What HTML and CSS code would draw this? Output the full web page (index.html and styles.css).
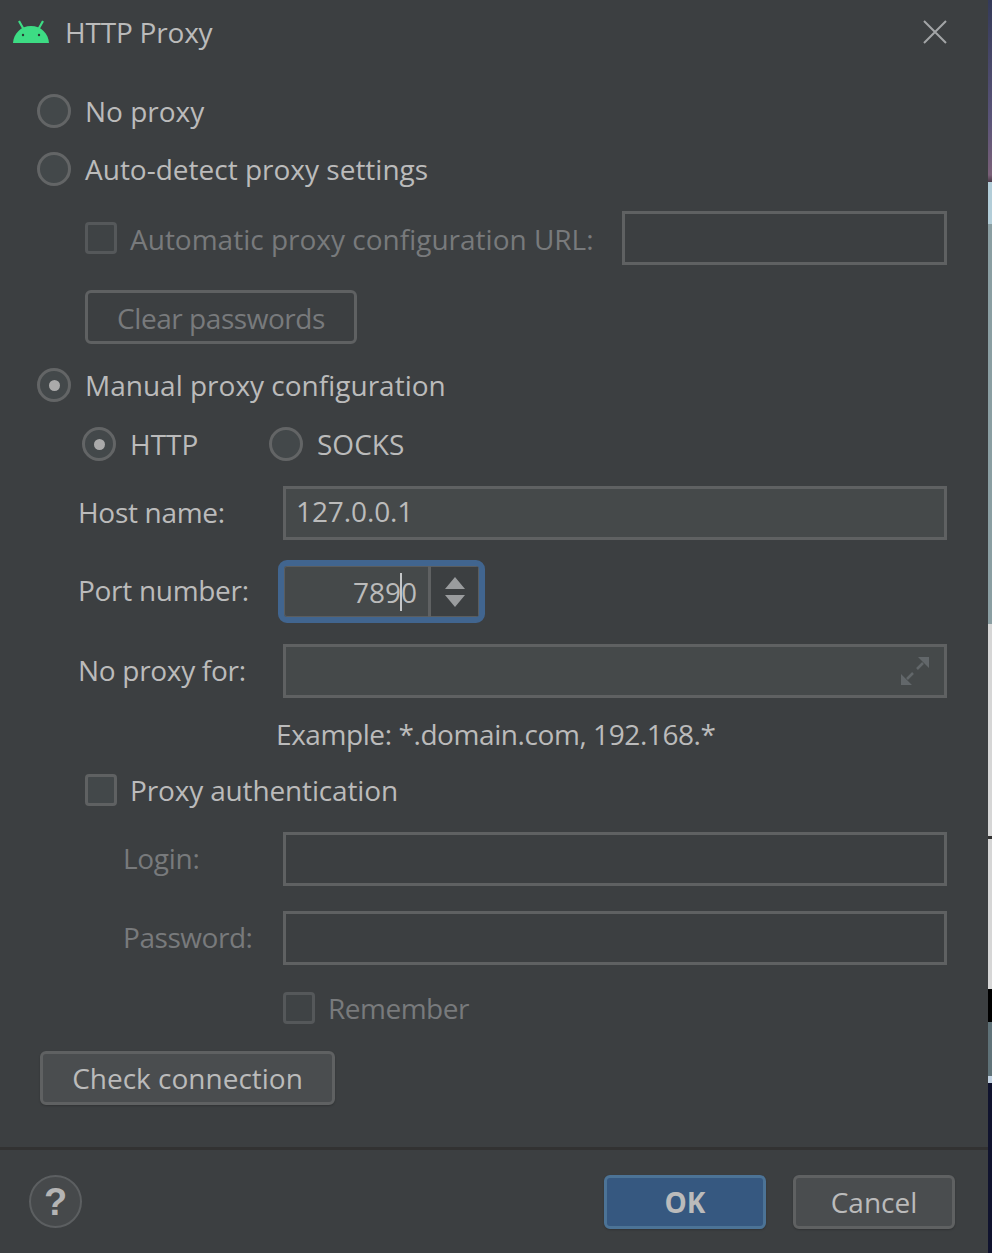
FILE: index.html
```html
<!DOCTYPE html>
<html lang="en">
<head>
<meta charset="utf-8">
<title>HTTP Proxy</title>
<link rel="stylesheet" href="styles.css">
</head>
<body>
<div class="screen">
  <main class="dialog">
    <header class="titlebar">
      <svg class="android" viewBox="0 0 36 24" width="36" height="24" aria-hidden="true">
        <path d="M0 23C0.600 13.500 8 6 18 6s17.400 7.500 18 17Z" fill="#3ddc84"/>
        <path d="M6 1 10.500 9M30 1 25.500 9" stroke="#3ddc84" stroke-width="2.200" fill="none"/>
        <circle cx="10" cy="15" r="1.200" fill="#2b3a33"/>
        <circle cx="26" cy="15" r="1.200" fill="#2b3a33"/>
      </svg>
      <span class="title">HTTP Proxy</span>
      <svg class="close" viewBox="0 0 24 24" width="24" height="24" aria-hidden="true">
        <path d="M1 1 23 23M23 1 1 23" stroke="#a3a5a7" stroke-width="2" fill="none"/>
      </svg>
    </header>

    <section class="content">
      <label class="row r-noproxy"><span class="radio"></span><span>No proxy</span></label>
      <label class="row r-auto"><span class="radio"></span><span>Auto-detect proxy settings</span></label>

      <div class="row r-url dim">
        <span class="check"></span>
        <span class="url-label">Automatic proxy configuration URL:</span>
        <span class="field field-url"></span>
      </div>

      <div class="r-clear"><span class="btn btn-clear">Clear passwords</span></div>

      <label class="row r-manual"><span class="radio on"></span><span>Manual proxy configuration</span></label>

      <div class="row r-type">
        <span class="radio on"></span><span class="type-http">HTTP</span>
        <span class="radio"></span><span>SOCKS</span>
      </div>

      <div class="form r-host">
        <span class="form-label">Host name:</span>
        <span class="field field-fill filled">127.0.0.1</span>
      </div>

      <div class="form r-port">
        <span class="form-label">Port number:</span>
        <span class="spinner">
          <span class="spin-value">789<span class="caret"></span>0</span>
          <span class="spin-arrows">
            <svg viewBox="0 0 20 30" width="20" height="30" aria-hidden="true">
              <path d="M10 0 20 12H0ZM0 18H20L10 30Z" fill="#9a9c9e"/>
            </svg>
          </span>
        </span>
      </div>

      <div class="form r-for">
        <span class="form-label">No proxy for:</span>
        <span class="field field-fill filled expand">
          <svg viewBox="0 0 28 28" width="28" height="28" aria-hidden="true">
            <path d="M28 0V11L17 0ZM0 28V17L11 28Z" fill="#62676a"/>
            <path d="M22 6 16 12M6 22 12 16" stroke="#62676a" stroke-width="2.500" fill="none"/>
          </svg>
        </span>
      </div>

      <div class="example">Example: *.domain.com, 192.168.*</div>

      <label class="row r-auth"><span class="check"></span><span>Proxy authentication</span></label>

      <div class="form r-login dim">
        <span class="form-label sub">Login:</span>
        <span class="field field-fill"></span>
      </div>
      <div class="form r-pass dim">
        <span class="form-label sub">Password:</span>
        <span class="field field-fill"></span>
      </div>

      <div class="row r-remember dim"><span class="check"></span><span>Remember</span></div>

      <div class="r-check"><span class="btn btn-check">Check connection</span></div>
    </section>

    <footer class="footer">
      <span class="help">?</span>
      <span class="actions">
        <span class="btn btn-ok">OK</span>
        <span class="btn btn-cancel">Cancel</span>
      </span>
    </footer>
  </main>
  <aside class="strip"></aside>
</div>
</body>
</html>
```
FILE: styles.css
```css
* { box-sizing: border-box; }
html, body { margin: 0; padding: 0; }
body {
  width: 992px;
  height: 1253px;
  overflow: hidden;
  background: #3c3f41;
  font-family: "Open Sans", "Noto Sans", sans-serif;
  font-size: 28px;
  line-height: 40px;
  color: #bbbbbb;
}
.screen { display: flex; height: 1253px; }
.dialog { width: 988px; display: flex; flex-direction: column; background: #3c3f41; }
.strip {
  width: 4px;
  background: linear-gradient(to bottom,
    #343a58 0, #5a5478 120px, #7a6078 175px, #4a3a48 182px,
    #b2cdd8 182px, #b2cdd8 224px,
    #8a9ea2 224px, #8a9ea2 624px,
    #d6d6d6 624px, #d6d6d6 836px, #333333 836px, #333333 839px, #d6d6d6 839px, #d6d6d6 989px,
    #000000 989px, #000000 1022px,
    #5f7278 1022px, #5f7278 1076px,
    #c0d0e0 1076px, #c0d0e0 1083px,
    #10132e 1083px, #10132e 1253px);
}

.titlebar { height: 64px; display: flex; align-items: center; padding: 0 41px 0 13px; }
.android { flex: none; }
.title { margin-left: 16px; flex: 1; letter-spacing: -0.2px; }
.close { flex: none; }

.content { flex: 1; display: flex; flex-direction: column; padding: 0 41px 0 37px; }
.row { display: flex; align-items: center; height: 40px; }
.dim { color: #787a7c; }

.radio {
  flex: none;
  width: 34px;
  height: 34px;
  border: 3px solid #636566;
  border-radius: 50%;
  background: #43484a;
  display: flex;
  align-items: center;
  justify-content: center;
  margin-right: 14px;
}
.radio.on::after {
  content: "";
  width: 11px;
  height: 11px;
  border-radius: 50%;
  background: #aaaaaa;
}
.check {
  flex: none;
  width: 32px;
  height: 32px;
  border: 3px solid #5f6162;
  border-radius: 4px;
  background: #43484a;
  margin-right: 13px;
}
.dim .check { border-color: #55585a; background: #3f4345; }
.field {
  display: block;
  height: 54px;
  border: 3px solid #5f6162;
  background: #3c3f41;
}
.filled { background: #45494a; }
.field-fill {
  flex: 1;
  padding: 0 10px;
  line-height: 44px;
  letter-spacing: -0.1px;
}

.r-noproxy { margin-top: 27px; }
.r-auto { margin-top: 18px; }
.r-url { margin-top: 22px; padding-left: 48px; height: 54px; }
.url-label { width: 492px; padding-top: 1px; flex: none; white-space: nowrap; }
.field-url { flex: 1; }
.r-clear { margin-top: 25px; padding-left: 48px; display: flex; }
.r-manual { margin-top: 21px; }
.r-type { margin-top: 19px; padding-left: 45px; }
.type-http { width: 139px; }
.form { display: flex; align-items: center; }
.form-label {
  width: 246px;
  padding: 0 0 3px 41px;
  flex: none;
  white-space: nowrap;
  letter-spacing: -0.3px;
}
.form-label.sub { padding-left: 86px; }
.r-pass .form-label { letter-spacing: -0.45px; }
.r-host { margin-top: 22px; height: 54px; }
.r-port { margin-top: 20px; height: 63px; }
.r-for { margin-top: 21px; height: 54px; }
.example { margin-top: 16px; padding-left: 239px; letter-spacing: -0.42px; }
.r-auth { margin-top: 16px; padding-left: 48px; letter-spacing: -0.15px; }
.r-login { margin-top: 22px; height: 54px; }
.r-login .form-label { padding-bottom: 2px; }
.r-pass { margin-top: 25px; height: 54px; }
.r-remember { margin-top: 23px; padding-left: 246px; letter-spacing: -0.5px; }
.r-check { margin-top: 23px; display: flex; padding-left: 3px; }

.spinner {
  width: 207px;
  height: 63px;
  margin-left: -5px;
  border: 6px solid #41658f;
  border-radius: 9px;
  display: flex;
  background: #45494a;
  box-shadow: inset 0 0 0 1px #5a5d5f;
}
.spin-value {
  width: 147px;
  height: 51px;
  text-align: right;
  padding-right: 11px;
  line-height: 53px;
  border-right: 3px solid #5f6162;
  white-space: nowrap;
}
.caret {
  display: inline-block;
  width: 2px;
  height: 38px;
  margin: 0 -1px;
  vertical-align: -8px;
  background: #c4c6c8;
}
.spin-arrows {
  flex: 1;
  margin: 1px 1px 1px 0;
  background: #3c3f41;
  display: flex;
  align-items: center;
  justify-content: center;
}
.expand { display: flex; align-items: center; justify-content: flex-end; padding-right: 15px; }

.btn {
  display: flex;
  align-items: center;
  justify-content: center;
  height: 54px;
  border: 3px solid #5f6162;
  border-radius: 6px;
}
.btn-clear {
  width: 272px;
  color: #787a7c;
  background: #3c3f41;
  padding-top: 1px;
  letter-spacing: -0.45px;
}
.btn-check { width: 295px; background: #4a4d4f; box-shadow: 0 1px 2px rgba(0,0,0,.2); }

.footer {
  height: 106px;
  border-top: 3px solid #323232;
  display: flex;
  align-items: center;
  justify-content: space-between;
  padding: 0 33px 0 29px;
}
.help {
  width: 53px;
  height: 53px;
  border: 2px solid #5c5f61;
  border-radius: 50%;
  background: #46494b;
  display: flex;
  align-items: center;
  justify-content: center;
  font-family: "Liberation Sans", sans-serif;
  font-weight: 700;
  font-size: 38px;
  color: #b4b4b4;
}
.actions { display: flex; gap: 27px; }
.btn-ok {
  width: 162px;
  background: #365880;
  border-color: #4c7396;
  font-weight: 700;
  box-shadow: 0 1px 2px rgba(0,0,0,.2);
}
.btn-cancel { width: 162px; background: #4a4d4f; box-shadow: 0 1px 2px rgba(0,0,0,.2); }
```
